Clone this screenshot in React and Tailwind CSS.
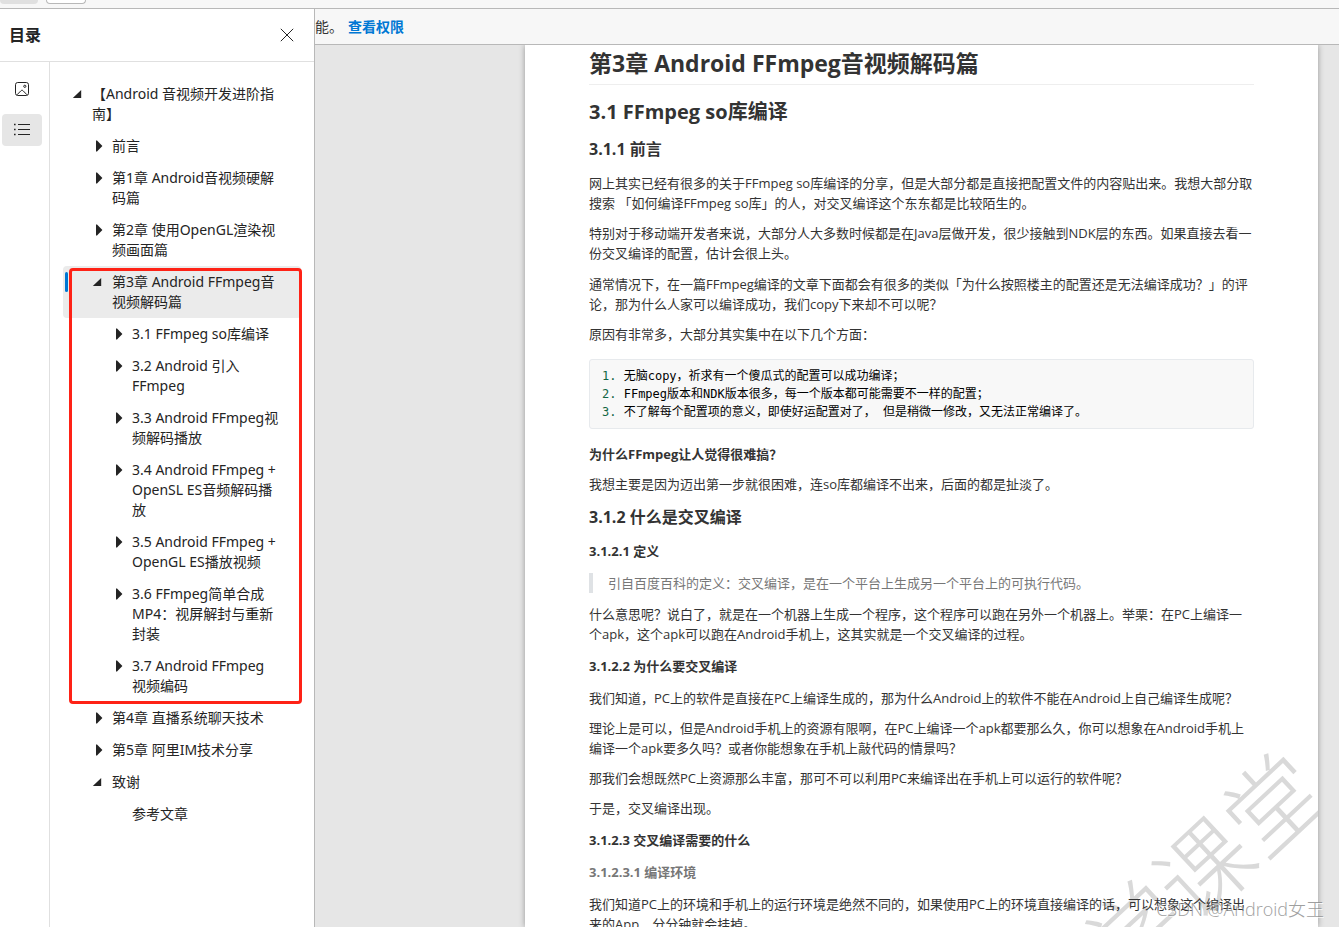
import React, { useState } from "react";

const outline = [
    {
        id: 'root', lines: ['【Android 音视频开发进阶指', '南】'], children: [
            { id: 'preface', lines: ['前言'], more: true },
            { id: 'ch1', lines: ['第1章 Android音视频硬解', '码篇'], more: true },
            { id: 'ch2', lines: ['第2章 使用OpenGL渲染视', '频画面篇'], more: true },
            {
                id: 'ch3', lines: ['第3章 Android FFmpeg音', '视频解码篇'], marked: true, children: [
                    { id: '3.1', lines: ['3.1 FFmpeg so库编译'], more: true },
                    { id: '3.2', lines: ['3.2 Android 引入', 'FFmpeg'], more: true },
                    { id: '3.3', lines: ['3.3 Android FFmpeg视', '频解码播放'], more: true },
                    { id: '3.4', lines: ['3.4 Android FFmpeg +', 'OpenSL ES音频解码播', '放'], more: true },
                    { id: '3.5', lines: ['3.5 Android FFmpeg +', 'OpenGL ES播放视频'], more: true },
                    { id: '3.6', lines: ['3.6 FFmpeg简单合成', 'MP4：视屏解封与重新', '封装'], more: true },
                    { id: '3.7', lines: ['3.7 Android FFmpeg', '视频编码'], more: true },
                ]
            },
            { id: 'ch4', lines: ['第4章 直播系统聊天技术'], more: true },
            { id: 'ch5', lines: ['第5章 阿里IM技术分享'], more: true },
            { id: 'thanks', lines: ['致谢'], children: [{ id: 'refs', lines: ['参考文章'] }] },
        ]
    },
]

const indents = ['pl-[9px]', 'pl-[29px]', 'pl-[49px]']

const Lines = ({ lines }) => lines.map((line, key) => <React.Fragment key={key}>
    {key > 0 ? <br /> : null}
    {line}
</React.Fragment>)

const Arrow = ({ open, more }) => {
    return <svg viewBox="0 0 12 12" className="w-3 h-5 mr-2 shrink-0 fill-[#242424]">
        {open ? <path d="M9.2 2v8H.8z" /> : null}
        {!open && more ? <path d="M4 .6h1L10.4 6 5 11.4H4z" /> : null}
    </svg>
}

const TreeItem = ({ item, level, selected, setSelected }) => {
    const active = selected === item.id
    return <li className="relative">
        <button
            type="button"
            onClick={() => setSelected(item.id)}
            className={`relative flex w-full py-1.5 rounded-sm text-left whitespace-nowrap ${indents[level]} ${active ? 'bg-[#ebebeb]' : ''}`}
        >
            {active ? <span className="absolute left-[2px] top-1.5 w-[3px] h-5 rounded-sm bg-[#0078d4]"></span> : null}
            <Arrow open={!!item.children} more={item.more} />
            <span><Lines lines={item.lines} /></span>
        </button>
        {item.children ? <ul>
            {item.children.map((child) => <TreeItem key={child.id} item={child} level={level + 1} selected={selected} setSelected={setSelected} />)}
        </ul> : null}
        {item.marked ? <div className="absolute left-[6px] -right-px top-[2px] -bottom-[2px] border-[3px] border-[#fe2216] rounded-[4px] pointer-events-none"></div> : null}
    </li>
}

const Sidebar = () => {
    const [selected, setSelected] = useState('ch3')
    return <aside className="flex flex-col w-[315px] shrink-0 bg-white border-r border-[#b8b8b8] text-[#242424]">
        <div className="flex items-center justify-between h-[53px] pl-[9px] pr-5 border-b border-[#e0e0e0]">
            <h2 className="text-base leading-6 font-semibold">目录</h2>
            <button type="button" aria-label="关闭">
                <svg viewBox="0 0 14 14" className="size-3.5 stroke-[#242424]" fill="none">
                    <path d="M.8.8l12.4 12.4M13.2.8L.8 13.2" />
                </svg>
            </button>
        </div>
        <div className="flex flex-1 min-h-0">
            <div className="flex flex-col gap-[9px] w-[50px] shrink-0 pl-[2px] pt-[11px] border-r border-[#e0e0e0]">
                <button type="button" aria-label="缩略图" className="flex items-center justify-center w-10 h-8">
                    <svg viewBox="0 0 16 16" className="size-4 stroke-[#242424]" fill="none">
                        <rect x="1.5" y="1.5" width="13" height="13" rx="2.2" />
                        <path d="M3 13.8l4-4.1c.6-.6 1.4-.6 2 0l4 4.1" />
                        <circle cx="10.8" cy="5.3" r="1.1" />
                    </svg>
                </button>
                <button type="button" aria-label="目录" className="flex items-center justify-center w-10 h-8 rounded-sm bg-[#e6e6e6]">
                    <svg viewBox="0 0 16 14" className="w-4 h-3.5 stroke-[#242424]" fill="none">
                        <path d="M4 1.5h12M4 6.5h12M4 11.5h12" />
                        <path strokeWidth="1.6" d="M0 1.500h1.6M0 6.500h1.6M0 11.500h1.6" />
                    </svg>
                </button>
            </div>
            <ul className="flex-1 min-w-0 pt-4 px-[13px] font-['Noto_Sans','Noto_Sans_CJK_SC',sans-serif] text-sm leading-5">
                {outline.map((item) => <TreeItem key={item.id} item={item} level={0} selected={selected} setSelected={setSelected} />)}
            </ul>
        </div>
    </aside>
}

const P = ({ lines, className = 'mt-2.5' }) => <p className={className}><Lines lines={lines} /></p>

const H3 = ({ children }) => <h3 className="mt-[11px] text-base leading-6 font-bold">{children}</h3>

const H4 = ({ children }) => <h4 className="mt-3 font-bold">{children}</h4>

const codeLines = [
    '无脑copy，祈求有一个傻瓜式的配置可以成功编译；',
    'FFmpeg版本和NDK版本很多，每一个版本都可能需要不一样的配置；',
    '不了解每个配置项的意义，即使好运配置对了， 但是稍微一修改，又无法正常编译了。',
]

const Article = () => {
    return <article className="relative flex-1 min-w-0 ml-[210px] mr-[21px] px-16 pt-1 overflow-hidden bg-white shadow-[0_0_6px_rgba(0,0,0,0.35)] text-[13px] leading-5 text-[#333] whitespace-nowrap">
        <div aria-hidden="true" className="absolute left-[453px] top-[809px] w-[380px] text-right text-[94px] leading-[94px] font-light text-[#d9d9d9] -rotate-[43deg]">学课堂</div>
        <div className="relative">
            <h1 className="pb-[7px] border-b border-[#eee] text-[23px] leading-7 font-bold">第3章 Android FFmpeg音视频解码篇</h1>
            <h2 className="mt-[13px] text-[20px] leading-7 font-bold">3.1 FFmpeg so库编译</h2>
            <H3>3.1.1 前言</H3>
            <P className="mt-3" lines={['网上其实已经有很多的关于FFmpeg so库编译的分享，但是大部分都是直接把配置文件的内容贴出来。我想大部分取', '搜索 「如何编译FFmpeg so库」的人，对交叉编译这个东东都是比较陌生的。']} />
            <P lines={['特别对于移动端开发者来说，大部分人大多数时候都是在Java层做开发，很少接触到NDK层的东西。如果直接去看一', '份交叉编译的配置，估计会很上头。']} />
            <P className="mt-[11px]" lines={['通常情况下，在一篇FFmpeg编译的文章下面都会有很多的类似「为什么按照楼主的配置还是无法编译成功？」的评', '论，那为什么人家可以编译成功，我们copy下来却不可以呢？']} />
            <P lines={['原因有非常多，大部分其实集中在以下几个方面：']} />
            <pre className="my-[15px] px-3 py-[7px] border border-[#e7eaed] rounded-[3px] bg-[#f8f8f8] font-['DejaVu_Sans_Mono','Noto_Sans_CJK_SC',monospace] text-[12px] leading-[18px] text-black">
                {codeLines.map((line, key) => <div key={key}><span className="text-[#116644]">{key + 1}. </span>{line}</div>)}
            </pre>
            <P className="font-bold" lines={['为什么FFmpeg让人觉得很难搞？']} />
            <P lines={['我想主要是因为迈出第一步就很困难，连so库都编译不出来，后面的都是扯淡了。']} />
            <H3>3.1.2 什么是交叉编译</H3>
            <H4>3.1.2.1 定义</H4>
            <blockquote className="mt-3 pl-[15px] border-l-4 border-[#dfe2e5] text-[#777]">引自百度百科的定义：交叉编译，是在一个平台上生成另一个平台上的可执行代码。</blockquote>
            <P className="mt-[11px]" lines={['什么意思呢？说白了，就是在一个机器上生成一个程序，这个程序可以跑在另外一个机器上。举栗：在PC上编译一', '个apk，这个apk可以跑在Android手机上，这其实就是一个交叉编译的过程。']} />
            <H4>3.1.2.2 为什么要交叉编译</H4>
            <P className="mt-3" lines={['我们知道，PC上的软件是直接在PC上编译生成的，那为什么Android上的软件不能在Android上自己编译生成呢？']} />
            <P lines={['理论上是可以，但是Android手机上的资源有限啊，在PC上编译一个apk都要那么久，你可以想象在Android手机上', '编译一个apk要多久吗？或者你能想象在手机上敲代码的情景吗？']} />
            <P lines={['那我们会想既然PC上资源那么丰富，那可不可以利用PC来编译出在手机上可以运行的软件呢？']} />
            <P lines={['于是，交叉编译出现。']} />
            <H4>3.1.2.3 交叉编译需要的什么</H4>
            <h5 className="mt-3 font-bold text-[#777]">3.1.2.3.1 编译环境</h5>
            <P className="mt-3" lines={['我们知道PC上的环境和手机上的运行环境是绝然不同的，如果使用PC上的环境直接编译的话，可以想象这个编译出', '来的App，分分钟就会挂掉。']} />
        </div>
    </article>
}

const App = () => {
    return <div className="flex flex-col h-screen overflow-hidden bg-[#e6e6e6] font-['Open_Sans','Noto_Sans_CJK_SC',sans-serif] [text-spacing-trim:space-all]">
        <div className="flex items-start gap-2 h-[9px] shrink-0 border-b border-[#b8b8b8] bg-[#f7f7f7]">
            <div className="w-[38px] h-1 bg-[#e0e0e0] rounded-b-sm"></div>
            <div className="w-10 h-1 border border-t-0 border-[#b8b8b8] bg-white rounded-b-sm"></div>
        </div>
        <div className="flex flex-1 min-h-0">
            <Sidebar />
            <main className="relative flex flex-col flex-1 min-w-0 overflow-hidden">
                <div className="flex items-center gap-2 h-9 shrink-0 border-b border-[#b8b8b8] bg-[#f7f7f7] text-sm leading-5 text-[#333]">
                    <span className="w-[25px] whitespace-nowrap">能。</span>
                    <a href="#" className="font-semibold text-[#0078d4]">查看权限</a>
                </div>
                <div className="flex flex-1 min-h-0 overflow-hidden">
                    <Article />
                </div>
                <div className="absolute right-[15px] bottom-1 text-lg leading-7 font-light text-[#888] opacity-80 [text-shadow:1px_1px_0_#fff]">CSDN @Android女王</div>
            </main>
        </div>
    </div>
}
export default App
